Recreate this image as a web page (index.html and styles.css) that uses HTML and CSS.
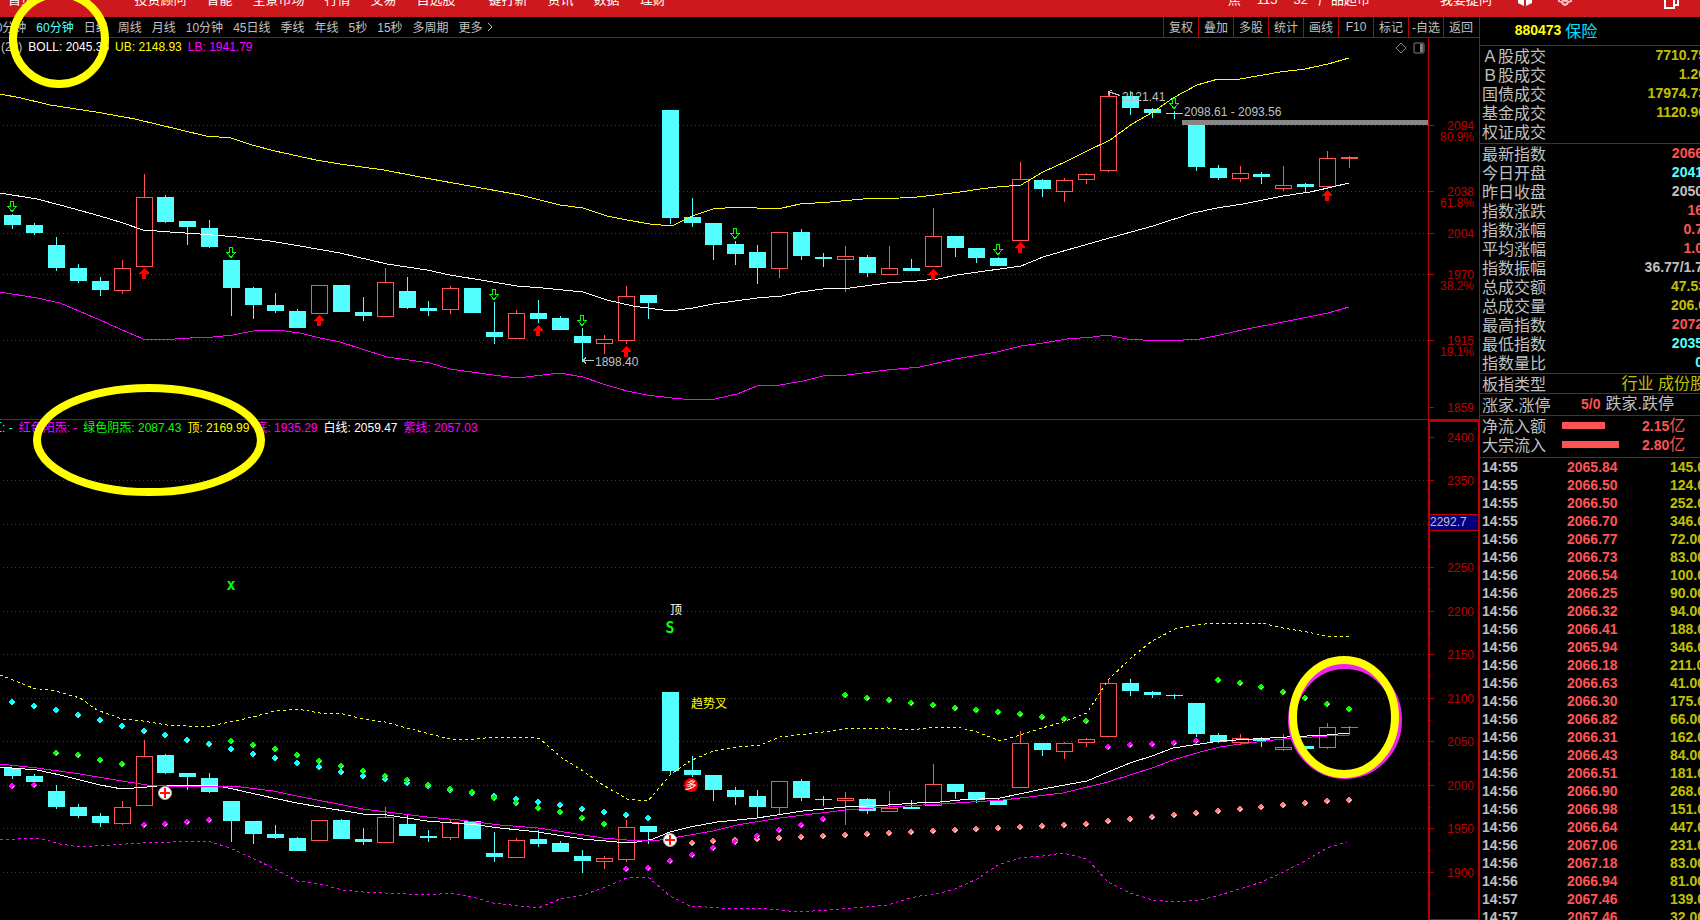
FILE: index.html
```html
<!DOCTYPE html>
<html lang="zh-CN">
<head>
<meta charset="utf-8">
<title>880473 保险</title>
<link rel="stylesheet" href="styles.css">
</head>
<body>
<div class="app">
  <header class="topbar">
    <nav class="menu">
      <a href="#">首页</a>
      <a href="#" class="menu-badge">42</a>
      <a href="#">投资顾问</a>
      <a href="#">智能</a>
      <a href="#">全景市场</a>
      <a href="#">行情</a>
      <a href="#">交易</a>
      <a href="#">自选股</a>
      <a href="#">一键打新</a>
      <a href="#">资讯</a>
      <a href="#">数据</a>
      <a href="#">理财</a>
    </nav>
    <nav class="menu menu-right">
      <a href="#">焦</a>
      <a href="#">115</a>
      <a href="#">32</a>
      <a href="#" class="shop">产品超市</a>
      <a href="#" class="ask">我要提问</a>
      <button class="icon-btn cube" aria-label="工具箱"><svg width="16" height="16" viewBox="0 0 16 16"><path d="M8 0l7 3-7 3-7-3zM1 4l6 3v9l-6-3zM15 4l-6 3v9l6-3z" fill="#fff"/></svg></button>
      <button class="icon-btn gear" aria-label="设置"><svg width="16" height="16" viewBox="0 0 16 16" fill="none" stroke="#f3c4c5" stroke-width="2"><path d="M6 1h4l1 2 2 1 2 3-1 2 0 2-3 1-1 2-2 1-2-1-1-2-3-1v-2l-1-2 2-3 2-1z"/><circle cx="8" cy="8" r="3"/></svg></button>
      <button class="icon-btn win" aria-label="窗口"><svg width="16" height="16" viewBox="0 0 16 16" fill="none" stroke="#fff" stroke-width="2"><path d="M1 4h9v10H1zM5 1h9v10h-4"/></svg></button>
    </nav>
  </header>
  <div class="workspace">
    <main class="charts">
      <div class="toolbar">
        <div class="periods">
          <button>30分钟</button>
          <button class="active">60分钟</button>
          <button>日线</button>
          <button>周线</button>
          <button>月线</button>
          <button>10分钟</button>
          <button>45日线</button>
          <button>季线</button>
          <button>年线</button>
          <button>5秒</button>
          <button>15秒</button>
          <button>多周期</button>
          <button class="more">更多<svg width="6" height="10" viewBox="0 0 6 10" fill="none" stroke="#c0c0c0"><path d="M1 1l4 4-4 4"/></svg></button>
        </div>
        <div class="actions">
          <button>复权</button>
          <button>叠加</button>
          <button>多股</button>
          <button>统计</button>
          <button>画线</button>
          <button>F10</button>
          <button>标记</button>
          <button>-自选</button>
          <button>返回</button>
        </div>
      </div>
      <section class="pane pane-main">
        <div class="plot">
          <svg id="main-plot" class="plot-svg"></svg>
          <div class="legend">
            <span class="gray">(20)</span>
            <span class="white">BOLL: 2045.36</span>
            <span class="yellow">UB: 2148.93</span>
            <span class="magenta">LB: 1941.79</span>
          </div>
          <div class="plot-tools">
            <svg width="12" height="12" viewBox="0 0 12 12" fill="none" stroke="#808080"><path d="M6 1l5 5-5 5-5-5z"/></svg>
            <svg width="12" height="12" viewBox="0 0 12 12"><rect x="1" y="1" width="10" height="10" rx="1" fill="none" stroke="#808080"/><path d="M7 2h3v8H7z" fill="#808080"/></svg>
          </div>
        </div>
        <svg id="main-axis" class="axis"></svg>
      </section>
      <section class="pane pane-sub">
        <div class="plot">
          <svg id="sub-plot" class="plot-svg"></svg>
          <div class="legend legend-sub">
            <span class="cyan">红: -</span>
            <span class="magenta">红色阳炁: -</span>
            <span class="green">绿色阴炁: 2087.43</span>
            <span class="yellow">顶: 2169.99</span>
            <span class="magenta">底: 1935.29</span>
            <span class="white">白线: 2059.47</span>
            <span class="magenta">紫线: 2057.03</span>
          </div>
        </div>
        <svg id="sub-axis" class="axis"></svg>
      </section>
    </main>
    <aside class="quote">
      <h1 class="title"><span class="code">880473</span><span class="name">保险</span></h1>
      <dl class="rows market">
        <div><dt>Ａ股成交</dt><dd class="amber wide">7710.75</dd></div>
        <div><dt>Ｂ股成交</dt><dd class="amber wide">1.20</dd></div>
        <div><dt>国债成交</dt><dd class="amber wide">17974.73</dd></div>
        <div><dt>基金成交</dt><dd class="amber wide">1120.90</dd></div>
        <div><dt>权证成交</dt><dd></dd></div>
      </dl>
      <dl class="rows">
        <div><dt>最新指数</dt><dd class="red">2066</dd></div>
        <div><dt>今日开盘</dt><dd class="aqua">2041</dd></div>
        <div><dt>昨日收盘</dt><dd class="gray">2050</dd></div>
        <div><dt>指数涨跌</dt><dd class="red">16</dd></div>
        <div><dt>指数涨幅</dt><dd class="red">0.7</dd></div>
        <div><dt>平均涨幅</dt><dd class="red">1.0</dd></div>
        <div><dt>指数振幅</dt><dd class="gray">36.77/1.7</dd></div>
        <div><dt>总成交额</dt><dd class="amber wide">47.53</dd></div>
        <div><dt>总成交量</dt><dd class="amber wide">206.0</dd></div>
        <div><dt>最高指数</dt><dd class="red">2072</dd></div>
        <div><dt>最低指数</dt><dd class="aqua">2035</dd></div>
        <div><dt>指数量比</dt><dd class="aqua">0</dd></div>
      </dl>
      <dl class="rows kind">
        <div><dt>板指类型</dt><dd class="amber wide text">行业 成份股</dd></div>
      </dl>
      <dl class="rows breadth">
        <div><dt>涨家.涨停</dt><dd class="red">5/0</dd><dd class="gray text">跌家.跌停</dd></div>
      </dl>
      <dl class="rows flows">
        <div><dt>净流入额</dt><dd class="meter"><span class="bar" style="width:43px"></span></dd><dd class="red">2.15<span class="text">亿</span></dd></div>
        <div><dt>大宗流入</dt><dd class="meter"><span class="bar" style="width:57px"></span></dd><dd class="red">2.80<span class="text">亿</span></dd></div>
      </dl>
      <div class="tick-wrap">
        <table class="ticks">
          <tbody>
            <tr><td>14:55</td><td>2065.84</td><td>145.0</td></tr>
            <tr><td>14:55</td><td>2066.50</td><td>124.0</td></tr>
            <tr><td>14:55</td><td>2066.50</td><td>252.0</td></tr>
            <tr><td>14:55</td><td>2066.70</td><td>346.0</td></tr>
            <tr><td>14:56</td><td>2066.77</td><td>72.00</td></tr>
            <tr><td>14:56</td><td>2066.73</td><td>83.00</td></tr>
            <tr><td>14:56</td><td>2066.54</td><td>100.0</td></tr>
            <tr><td>14:56</td><td>2066.25</td><td>90.00</td></tr>
            <tr><td>14:56</td><td>2066.32</td><td>94.00</td></tr>
            <tr><td>14:56</td><td>2066.41</td><td>188.0</td></tr>
            <tr><td>14:56</td><td>2065.94</td><td>346.0</td></tr>
            <tr><td>14:56</td><td>2066.18</td><td>211.0</td></tr>
            <tr><td>14:56</td><td>2066.63</td><td>41.00</td></tr>
            <tr><td>14:56</td><td>2066.30</td><td>175.0</td></tr>
            <tr><td>14:56</td><td>2066.82</td><td>66.00</td></tr>
            <tr><td>14:56</td><td>2066.31</td><td>162.0</td></tr>
            <tr><td>14:56</td><td>2066.43</td><td>84.00</td></tr>
            <tr><td>14:56</td><td>2066.51</td><td>181.0</td></tr>
            <tr><td>14:56</td><td>2066.90</td><td>268.0</td></tr>
            <tr><td>14:56</td><td>2066.98</td><td>151.0</td></tr>
            <tr><td>14:56</td><td>2066.64</td><td>447.0</td></tr>
            <tr><td>14:56</td><td>2067.06</td><td>231.0</td></tr>
            <tr><td>14:56</td><td>2067.18</td><td>83.00</td></tr>
            <tr><td>14:56</td><td>2066.94</td><td>81.00</td></tr>
            <tr><td>14:57</td><td>2067.46</td><td>139.0</td></tr>
            <tr><td>14:57</td><td>2067.46</td><td>32.00</td></tr>
          </tbody>
        </table>
      </div>
    </aside>
  </div>
  <svg class="marks" aria-hidden="true">
    <g fill="none" stroke-width="8">
      <ellipse cx="1345" cy="720" rx="53" ry="55" stroke="#ee22ee"/>
      <g stroke="#ffff00">
        <ellipse cx="59" cy="39" rx="46" ry="45"/>
        <ellipse cx="149" cy="440" rx="112" ry="52"/>
        <ellipse cx="1344" cy="717" rx="51" ry="57"/>
      </g>
    </g>
  </svg>
</div>
<script src="chart.js"></script>
</body>
</html>
```

FILE: styles.css
```css
* { box-sizing: border-box; }

html, body { height: 100%; }

body {
  margin: 0;
  background: #000;
  color: #c0c0c0;
  font-family: "Liberation Sans", "Noto Sans CJK SC", sans-serif;
  font-size: 12px;
  overflow: hidden;
}

button {
  margin: 0;
  padding: 0;
  border: 0;
  background: none;
  color: inherit;
  font: inherit;
  white-space: nowrap;
}

dl, dd, dt, h1 { margin: 0; }

.app {
  position: relative;
  display: grid;
  grid-template-rows: 17px minmax(0, 1fr);
  height: 100vh;
}

.marks {
  position: absolute;
  inset: 0;
  width: 100%;
  height: 100%;
  pointer-events: none;
}

/* top bar */
.topbar {
  display: flex;
  justify-content: space-between;
  background: #cd181e;
  overflow: hidden;
}

.menu {
  display: flex;
  align-items: flex-start;
  gap: 20px;
  height: 20px;
  margin-top: -10px;
  padding-left: 8px;
  font-size: 13px;
  line-height: 20px;
}

.menu a {
  color: #fff;
  text-decoration: none;
  white-space: nowrap;
}

.menu-badge { padding: 0 22px 0 24px; }
.menu-right { padding: 0 20px 0 0; gap: 16px; }
.menu-right .shop { margin-left: -6px; }
.menu-right .ask { margin-left: 54px; }
.icon-btn { width: 16px; height: 16px; }
.icon-btn svg { display: block; }
.cube { margin-left: 9px; }
.gear { margin-left: 8px; }
.win { margin: 4px 0 0 75px; }

/* layout */
.workspace {
  display: grid;
  grid-template-columns: minmax(0, 1fr) 221px;
  min-height: 0;
}

.charts {
  display: grid;
  grid-template-rows: 21px minmax(0, 381fr) minmax(0, 501fr);
  min-height: 0;
}

.toolbar {
  display: flex;
  justify-content: space-between;
  border-bottom: 1px solid #c00000;
  overflow: hidden;
}

.periods {
  display: flex;
  gap: 10px;
  margin-left: -11px;
}

.toolbar button { padding-bottom: 1px; }

.periods .active { color: #54ffff; }

.more {
  display: flex;
  align-items: center;
  gap: 4px;
}

.actions { display: flex; padding-right: 1px; }

.actions button {
  width: 35px;
  border-left: 1px solid #c00000;
}

/* chart panes */
.pane {
  display: grid;
  grid-template-columns: minmax(0, 1fr) 51px;
  min-height: 0;
}

.pane-sub { border-top: 1px solid #c00000; }

.plot {
  position: relative;
  min-width: 0;
  overflow: hidden;
}

.plot-svg, .axis {
  display: block;
  width: 100%;
  height: 100%;
}

.plot-svg { position: absolute; inset: 0; }

.axis { border-left: 1px solid #c00000; }

.pane-sub .axis {
  border: 2px solid #c00000;
  border-right-width: 1px;
  border-bottom-width: 1px;
}

.legend {
  position: relative;
  display: flex;
  gap: 6px;
  padding-left: 1px;
  line-height: 18px;
  white-space: nowrap;
}

.legend-sub { margin-left: -11px; line-height: 17px; }

.plot-tools {
  position: absolute;
  top: 4px;
  right: 3px;
  display: flex;
  gap: 6px;
}

.tick-text { fill: #c00000; text-anchor: end; }
.note { fill: #c0c0c0; }
.crisp { shape-rendering: crispEdges; }
.tag { font-size: 12px; }
.letter { font: bold 15px "DejaVu Sans Mono", monospace; fill: #00ff00; text-anchor: middle; }
.duo { font-size: 11px; font-style: italic; fill: #fff; text-anchor: middle; }

/* quote panel */
.quote {
  display: flex;
  flex-direction: column;
  min-height: 0;
  border-left: 1px solid #c00000;
  overflow: hidden;
}

.title {
  display: flex;
  align-items: center;
  justify-content: center;
  gap: 4px;
  flex: none;
  height: 29px;
  padding: 0 68px 3px 0;
  border-bottom: 1px solid #c00000;
  font-size: 14px;
}

.code { color: #ffff00; }
.name { color: #00e5ff; font-size: 16px; font-weight: 400; }

.rows {
  flex: none;
  padding: 0 0 1px 2px;
  border-bottom: 1px solid #c00000;
  font-size: 16px;
}

.rows.market { padding-bottom: 2px; }

.rows > div {
  display: flex;
  justify-content: space-between;
  height: 19px;
  line-height: 19px;
  white-space: nowrap;
}

.rows dt { font-family: "Noto Sans CJK SC", sans-serif; }

.rows dd {
  margin-right: -3px;
  font-size: 14px;
  font-weight: 700;
}

.rows dd.wide { margin-right: -6px; }
.rows .text { font-size: 16px; font-weight: 400; }

.rows.kind { padding-bottom: 0; }

.rows.breadth > div { height: 20px; line-height: 20px; justify-content: flex-start; }
.breadth dt { width: 99px; }
.breadth dd { margin-right: 5px; }

.rows.flows { padding-bottom: 3px; }
.flows > div { justify-content: flex-start; }
.flows dt { width: 80px; }
.flows .meter { display: flex; align-items: center; width: 80px; margin: 0; }
.bar { height: 7px; background: #ff5454; }

.tick-wrap { flex: 1; min-height: 0; overflow: hidden; }

.ticks {
  width: 100%;
  table-layout: fixed;
  border-collapse: collapse;
  font-size: 14px;
  font-weight: 700;
}

.ticks td { height: 18px; padding: 0; line-height: 18px; white-space: nowrap; }
.ticks td:nth-child(1) { width: 87px; padding-left: 2px; }
.ticks td:nth-child(2) { width: 103px; color: #ff5454; }
.ticks td:nth-child(3) { color: #c0c000; overflow: hidden; }

/* colours */
.gray { color: #c0c0c0; }
.white { color: #fff; }
.yellow { color: #ffff00; }
.magenta { color: #ff00ff; }
.green { color: #00ff00; }
.cyan { color: #00ffff; }
.amber { color: #c0c000; }
.red { color: #ff5454; }
.aqua { color: #54ffff; }
```

FILE: chart.js
```js
const NS = 'http://www.w3.org/2000/svg';
const RED = '#ff5454', CYAN = '#54ffff', DARK = '#c00000';

function add(parent, tag, attrs, text) {
  const el = document.createElementNS(NS, tag);
  for (const k in attrs) el.setAttribute(k, attrs[k]);
  if (text !== undefined) el.textContent = text;
  parent.appendChild(el);
  return el;
}

const barX = i => Math.round(12 + 21.92 * i);

// Each candle: direction, high, body top, body bottom, low
const mainCandles = `c 214 215 225 229|c 223 225 233 235|c 237 245 268 271|c 264 268 281 283|c 277 281 290 296|r 260 268 291 294|r 174 197 267 267|c 195 197 222 223|c 221 221 227 245|c 220 228 247 248
c 260 260 288 316|c 287 288 305 319|c 293 305 311 313|c 309 311 328 328|r 285 285 314 314|c 285 285 312 312|c 297 312 316 321|r 268 282 317 317|c 277 291 308 309|c 301 308 311 316
r 286 288 310 314|c 288 288 313 313|c 302 332 337 344|r 310 313 339 339|c 300 313 319 323|c 316 318 330 330|c 328 336 343 362|r 335 339 344 354|r 286 296 341 344|c 295 295 303 319
c 110 110 218 224|c 198 217 223 227|c 223 223 245 260|c 241 244 254 265|c 245 252 268 284|r 232 232 269 278|c 229 232 256 260|c 253 257 259 267|r 246 256 260 292|c 255 257 273 277
r 246 268 275 275|c 259 268 271 271|r 208 236 267 267|c 236 236 248 257|c 248 248 258 263|c 257 258 266 266|r 162 179 241 241|c 179 180 189 197|r 178 180 192 202|r 173 174 180 184
r 93 96 171 172|c 91 96 108 115|c 108 109 113 118|c 111 113 114 119|c 125 125 167 171|c 165 168 178 180|r 166 173 179 182|c 172 174 177 184|r 166 185 189 191|c 183 184 187 193
r 151 158 187 188|r 156 157 159 168`;

const subCandles = `c 768 768 776 779|c 774 776 782 783|c 785 791 807 809|c 804 807 816 818|c 813 816 823 827|r 801 807 824 825|r 740 756 806 806|c 754 755 773 774|c 773 773 777 790|c 773 778 792 793
c 801 801 821 842|c 821 821 834 844|c 825 834 838 839|c 837 838 851 851|r 820 820 841 841|c 819 820 839 839|c 828 839 842 845|r 807 817 843 843|c 815 824 836 836|c 830 836 838 842
r 820 822 838 840|c 821 821 839 839|c 832 853 857 862|r 838 840 858 858|c 830 839 844 847|c 841 843 852 852|c 850 856 861 873|r 856 858 862 869|r 820 827 860 862|c 826 826 832 844
c 692 692 771 775|c 756 770 775 777|c 775 775 790 801|c 787 790 797 805|c 790 796 807 818|r 781 781 808 814|c 779 781 798 801|c 796 799 800 806|r 792 798 801 825|c 798 799 811 814
r 791 808 812 812|c 800 807 809 809|r 764 784 806 806|c 784 784 792 799|c 792 792 800 803|c 799 800 805 805|r 731 743 788 788|c 743 743 750 756|r 742 743 752 759|r 738 739 743 747
r 680 683 737 737|c 679 683 691 696|c 691 692 695 698|c 694 695 696 699|c 703 703 734 737|c 733 735 742 743|r 734 738 743 745|c 737 739 741 747|r 734 747 750 751|c 746 746 749 749
r 723 727 748 749|r 726 727 728 735`;

function grid(g, ys) {
  for (const y of ys) {
    add(g, 'line', { x1: 3, x2: '100%', y1: y + .5, y2: y + .5, stroke: DARK, 'stroke-dasharray': '1 3' });
  }
}

function candles(g, data) {
  data.split(/[|\n]/).forEach((row, i) => {
    const [dir, h, t, b, l] = row.split(' ').map((v, k) => k ? +v : v);
    const x = barX(i), color = dir === 'r' ? RED : CYAN;
    if (dir === 'r' && b - t > 2) {
      if (h < t) add(g, 'rect', { x, y: h, width: 1, height: t - h, fill: color });
      if (l > b) add(g, 'rect', { x, y: b, width: 1, height: l - b, fill: color });
      add(g, 'rect', { x: x - 7.5, y: t + .5, width: 16, height: b - t - 1, fill: '#000', stroke: color });
    } else {
      add(g, 'rect', { x, y: h, width: 1, height: Math.max(1, l - h), fill: color });
      add(g, 'rect', { x: x - 8, y: t, width: 17, height: b - t, fill: color });
    }
  });
}

function line(g, points, stroke, dash) {
  const attrs = { points, fill: 'none', stroke };
  if (dash) attrs['stroke-dasharray'] = dash;
  add(g, 'polyline', attrs);
}

function dots(g, start, ys, fill) {
  ys.forEach((y, k) => {
    const x = barX(start + k);
    add(g, 'path', { d: `M${x - 1} ${y - 3}h2v1h1v1h1v2h-1v1h-1v1h-2v-1h-1v-1h-1v-2h1v-1h1z`, fill });
    add(g, 'path', { d: `M${x + 1} ${y}h1v1h-1v1h-1v-1h1z`, fill: '#fff' });
  });
}

function plotGroup(id, top) {
  return add(document.getElementById(id), 'g', { transform: `translate(0,${-top})` });
}

// Main chart
const m = plotGroup('main-plot', 38);
const mc = add(m, 'g', { class: 'crisp' });
grid(mc, [125, 191, 233, 274, 340]);
candles(mc, mainCandles);
add(mc, 'rect', { x: 1182, y: 120, width: '100%', height: 5, fill: '#868686' });
line(mc, '0,94 21,98 50,105 96,112 135,119 206,136 231,138 252,145 275,151 316,160 340,164 384,170 420,177 453,183 487,189 520,195 560,205 583,208 607,216 627,220 650,224 672,226 692,216 713,209 737,207 757,208 782,208 800,204 830,202 863,199 900,198 917,197 935,195 960,192 980,189 997,187 1021,185 1043,172 1065,162 1087,151 1110,140 1132,124 1153,112 1173,98 1197,85 1218,79 1240,79 1280,72 1305,69 1328,64 1349,58', '#ffff00');
line(mc, '0,193 37,199 60,205 100,216 123,223 143,230 170,232 200,234 237,237 270,241 300,246 340,253 387,264 427,270 450,275 493,282 517,286 543,288 563,290 583,292 607,300 633,306 670,311 693,308 713,304 757,298 782,296 800,292 823,289 850,288 887,283 917,281 938,279 957,275 1021,266 1043,257 1067,250 1113,237 1153,226 1193,213 1217,208 1243,204 1283,196 1310,192 1328,188 1349,183', '#fff');
line(mc, '0,292 37,298 60,303 100,320 120,329 143,339 175,339 190,338 213,337 233,335 253,331 277,330 300,333 320,338 340,342 387,357 430,363 450,369 493,375 517,378 560,373 583,377 603,384 627,391 647,395 672,398 693,400 715,399 737,394 757,386 780,385 803,381 823,376 847,375 887,370 920,367 955,359 997,352 1021,346 1043,343 1067,339 1093,337 1107,335 1127,339 1143,340 1183,340 1200,339 1220,335 1242,330 1283,322 1328,313 1349,307', '#ff00ff');

for (const [i, y] of [[0, 201], [10, 247], [22, 289], [26, 315], [33, 228], [45, 244], [53, 98]]) {
  const x = barX(i) - .5;
  add(mc, 'path', { d: `M${x - 1} ${y + .5}h3v5h3l-4.500 5-4.500-5h3z`, fill: 'none', stroke: '#00ff00' });
}
for (const [i, y] of [[6, 268], [14, 315], [24, 325], [28, 346], [42, 269], [46, 242], [60, 190]]) {
  const x = barX(i);
  add(mc, 'path', { d: `M${x} ${y}l5 5v1h-3v5h-4v-5h-3v-1z`, fill: '#ff0000' });
}
add(mc, 'path', { d: 'M583 360.500h11M583 360.500l3-3M583 360.500l3 3M1108 91.500l12 4M1108 91.500l4-1M1108 91.500l2 4', fill: 'none', stroke: '#c0c0c0' });
add(m, 'text', { x: 595, y: 366, class: 'note' }, '1898.40');
add(m, 'text', { x: 1122, y: 101, class: 'note' }, '2121.41');
add(m, 'text', { x: 1184, y: 116, class: 'note' }, '2098.61 - 2093.56');

// Indicator chart
const s = plotGroup('sub-plot', 420);
const sc = add(s, 'g', { class: 'crisp' });
grid(sc, [480, 524, 567, 611, 654, 698, 741, 785, 828, 872]);
candles(sc, subCandles);
line(sc, '0,675 13,680 33,688 55,691 80,698 97,710 122,719 143,721 167,725 187,726 210,726 230,722 253,717 275,711 297,709 320,713 343,714 363,719 385,722 407,728 430,734 450,739 477,739 493,737 527,737 540,739 562,758 583,771 603,785 627,799 648,801 670,775 690,761 713,751 737,747 760,745 780,737 823,732 845,729 888,728 910,730 937,727 957,727 977,732 1000,741 1020,735 1042,728 1063,722 1087,713 1108,680 1132,657 1152,641 1175,629 1197,625 1213,623 1262,623 1283,628 1307,632 1327,636 1349,637', '#ffff00', '3 3');
line(sc, '0,840 33,838 47,840 60,844 80,847 110,845 143,843 170,842 208,841 230,848 252,858 273,868 297,881 320,884 343,890 363,892 430,895 450,893 473,897 493,903 538,908 560,899 583,895 603,888 627,878 648,877 670,896 690,906 737,909 757,908 800,912 867,907 888,905 910,898 920,896 940,893 955,889 977,879 998,865 1020,858 1043,856 1063,853 1087,859 1108,882 1130,893 1152,900 1173,902 1200,900 1220,895 1262,882 1283,872 1305,861 1327,848 1347,842', '#ff00ff', '3 3');
line(sc, '0,767 37,770 60,775 100,785 122,789 147,787 167,785 213,785 233,789 273,798 297,803 320,807 363,814 387,815 427,821 477,825 500,828 538,832 583,839 617,842 637,842 653,839 670,832 690,827 717,822 757,818 803,811 845,807 888,805 917,803 940,802 960,800 1000,798 1043,789 1087,781 1108,772 1130,763 1152,756 1173,748 1200,744 1220,741 1253,739 1287,737 1327,735 1349,733', '#fff');
line(sc, '0,764 37,768 80,774 122,781 147,785 167,786 233,786 273,791 297,796 363,809 427,817 460,820 500,825 538,828 603,838 627,840 660,840 690,835 713,831 737,825 780,818 845,810 888,807 940,804 1003,800 1063,793 1108,782 1152,768 1173,760 1200,752 1220,747 1240,744 1283,739 1327,736 1349,735', '#ff00ff');

dots(sc, 0, [702, 706, 710, 715, 720, 726, 731, 735, 740, 744, 749, 754, 758, 763, 767, 772, 776, 779, 783, 786, 790, 793, 796, 799, 802, 805, 809, 812, 815, 818], '#00ffff');
dots(sc, 2, [753, 755, 760, 764], '#00ff00');
dots(sc, 10, [741, 745, 749, 755, 761, 766, 771, 776, 780, 785, 789, 792, 798, 803, 808, 812, 818, 824], '#00ff00');
dots(sc, 38, [695, 698, 700, 703, 705, 708, 710, 712, 714, 717, 719, 721], '#00ff00');
dots(sc, 55, [680, 683, 687, 692, 698, 704, 709], '#00ff00');
dots(sc, 31, [843, 841, 840, 839, 838, 837, 836, 835, 834, 833, 832, 831, 830, 829, 828, 827, 826, 825, 824, 821, 819, 817, 815, 813, 811, 809, 807, 805, 803, 801, 800], '#ff8080');
dots(sc, 0, [786, 785], '#ff00ff');
dots(sc, 6, [825, 824, 822, 820], '#ff00ff');
dots(sc, 28, [869, 868, 861, 855, 848, 842, 836, 830, 825, 819], '#ff00ff');
dots(sc, 50, [747, 745, 744, 743, 741], '#ff00ff');

for (const [x, y] of [[165, 793], [670, 840]]) {
  add(s, 'circle', { cx: x, cy: y, r: 6.5, fill: '#fff', stroke: '#b0a8a0' });
  add(s, 'path', { d: `M${x - 5} ${y}h10M${x} ${y - 5}v10`, stroke: '#ff1010', 'stroke-width': 2 });
}
add(s, 'circle', { cx: 691, cy: 785, r: 7, fill: '#f00000' });
add(s, 'text', { x: 690, y: 789, class: 'duo' }, '多');
add(s, 'text', { x: 670, y: 614, class: 'tag', fill: '#fff' }, '顶');
add(s, 'text', { x: 670, y: 633, class: 'letter' }, 'S');
add(s, 'text', { x: 231, y: 590, class: 'letter' }, 'x');
add(s, 'text', { x: 691, y: 708, class: 'tag', fill: '#ffff00' }, '趋势叉');

// Axes
const ma = plotGroup('main-axis', 38);
for (const [y, price, pct] of [[125, '2094', '80.9%'], [191, '2038', '61.8%'], [233, '2004'], [274, '1970', '38.2%'], [340, '1915', '19.1%'], [407, '1859']]) {
  add(ma, 'rect', { x: 0, y, width: 5, height: 1, fill: DARK });
  add(ma, 'text', { x: 45, y: y + 5, class: 'tick-text' }, price);
  if (pct) add(ma, 'text', { x: 45, y: y + 16, class: 'tick-text' }, pct);
}

const sa = plotGroup('sub-axis', 422);
[437, 480, 524, 567, 611, 654, 698, 741, 785, 828, 872].forEach((y, i) => {
  add(sa, 'rect', { x: 0, y, width: 4, height: 1, fill: DARK });
  add(sa, 'rect', { x: 0, y: y + 22, width: 1, height: 1, fill: DARK });
  if (i !== 2) add(sa, 'text', { x: 44, y: y + 5, class: 'tick-text' }, String(2400 - 50 * i));
});
add(sa, 'rect', { x: 0, y: 514, width: '100%', height: 17, fill: DARK });
add(sa, 'rect', { x: 0, y: 515, width: '100%', height: 15, fill: '#000080' });
add(sa, 'text', { x: 0, y: 526, class: 'note' }, '2292.7');
```
